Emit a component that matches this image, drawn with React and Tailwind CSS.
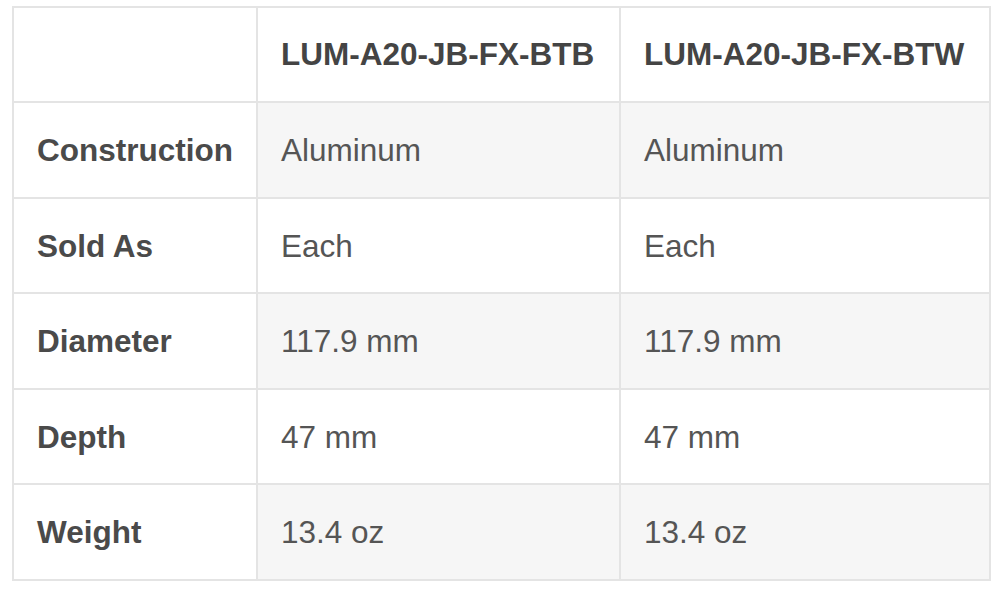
const rows = [
  { label: "Construction", a: "Aluminum", b: "Aluminum", shaded: true },
  { label: "Sold As", a: "Each", b: "Each", shaded: false },
  { label: "Diameter", a: "117.9 mm", b: "117.9 mm", shaded: true },
  { label: "Depth", a: "47 mm", b: "47 mm", shaded: false },
  { label: "Weight", a: "13.4 oz", b: "13.4 oz", shaded: true },
];

export default function App() {
  return (
    <div className="min-h-[595px] w-[1000px] bg-white pl-[12px] pt-[6px] font-['Liberation_Sans',Arial,sans-serif]">
      <table className="w-[979px] table-fixed border-collapse border-2 border-[#e4e4e4] text-left text-[31.5px] leading-none">
        <colgroup>
          <col className="w-[244px]" />
          <col className="w-[363px]" />
          <col />
        </colgroup>
        <thead>
          <tr className="h-[95px]">
            <th className="border-2 border-[#e4e4e4] px-[23px]"></th>
            <th className="border-2 border-[#e4e4e4] px-[23px] font-bold text-[#444]">LUM-A20-JB-FX-BTB</th>
            <th className="border-2 border-[#e4e4e4] px-[23px] font-bold text-[#444]">LUM-A20-JB-FX-BTW</th>
          </tr>
        </thead>
        <tbody>
          {rows.map((row) => (
            <tr key={row.label} className="h-[95.6px]">
              <td className="border-2 border-[#e4e4e4] bg-white px-[23px] pt-[2px] font-bold text-[#4a4a4a]">{row.label}</td>
              <td className={`border-2 border-[#e4e4e4] px-[23px] pt-[2px] text-[#555] ${row.shaded ? "bg-[#f6f6f6]" : "bg-white"}`}>{row.a}</td>
              <td className={`border-2 border-[#e4e4e4] px-[23px] pt-[2px] text-[#555] ${row.shaded ? "bg-[#f6f6f6]" : "bg-white"}`}>{row.b}</td>
            </tr>
          ))}
        </tbody>
      </table>
    </div>
  );
}
